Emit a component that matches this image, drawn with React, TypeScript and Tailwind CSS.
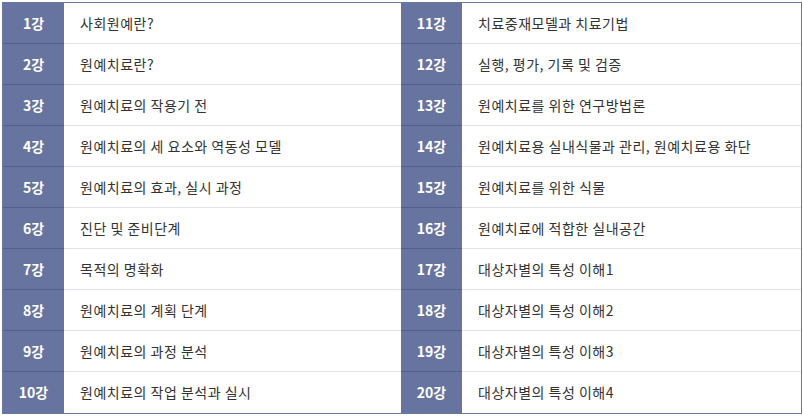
const left = [
  "사회원예란?",
  "원예치료란?",
  "원예치료의 작용기 전",
  "원예치료의 세 요소와 역동성 모델",
  "원예치료의 효과, 실시 과정",
  "진단 및 준비단계",
  "목적의 명확화",
  "원예치료의 계획 단계",
  "원예치료의 과정 분석",
  "원예치료의 작업 분석과 실시",
];

const right = [
  "치료중재모델과 치료기법",
  "실행, 평가, 기록 및 검증",
  "원예치료를 위한 연구방법론",
  "원예치료용 실내식물과 관리, 원예치료용 화단",
  "원예치료를 위한 식물",
  "원예치료에 적합한 실내공간",
  "대상자별의 특성 이해1",
  "대상자별의 특성 이해2",
  "대상자별의 특성 이해3",
  "대상자별의 특성 이해4",
];

const Cell = ({ n, text, last }: { n: number; text: string; last: boolean }) => (
  <>
    <div
      className={`h-[41px] flex items-center justify-center bg-[#67749f] text-white font-bold text-[14px] ${
        last ? "h-[40px]" : "border-b border-[#55608a]"
      }`}
    >
      {n}강
    </div>
    <div
      className={`h-[41px] flex items-center pl-[16px] text-[#333] text-[14px] tracking-[0.5px] bg-white ${
        last ? "h-[40px]" : "border-b border-[#e1e3ea]"
      }`}
    >
      {text}
    </div>
  </>
);

export default function App() {
  return (
    <div
      className="p-[2px] bg-white"
      style={{ fontFamily: '"Noto Sans CJK KR", "Noto Sans", sans-serif' }}
    >
      <div className="w-[800px] border border-[#6b77a3] grid grid-cols-[61px_337px_61px_339px]">
        {left.map((t, i) => (
          <div key={i} className="contents">
            <Cell n={i + 1} text={t} last={i === left.length - 1} />
            <Cell n={i + 11} text={right[i]} last={i === left.length - 1} />
          </div>
        ))}
      </div>
    </div>
  );
}
